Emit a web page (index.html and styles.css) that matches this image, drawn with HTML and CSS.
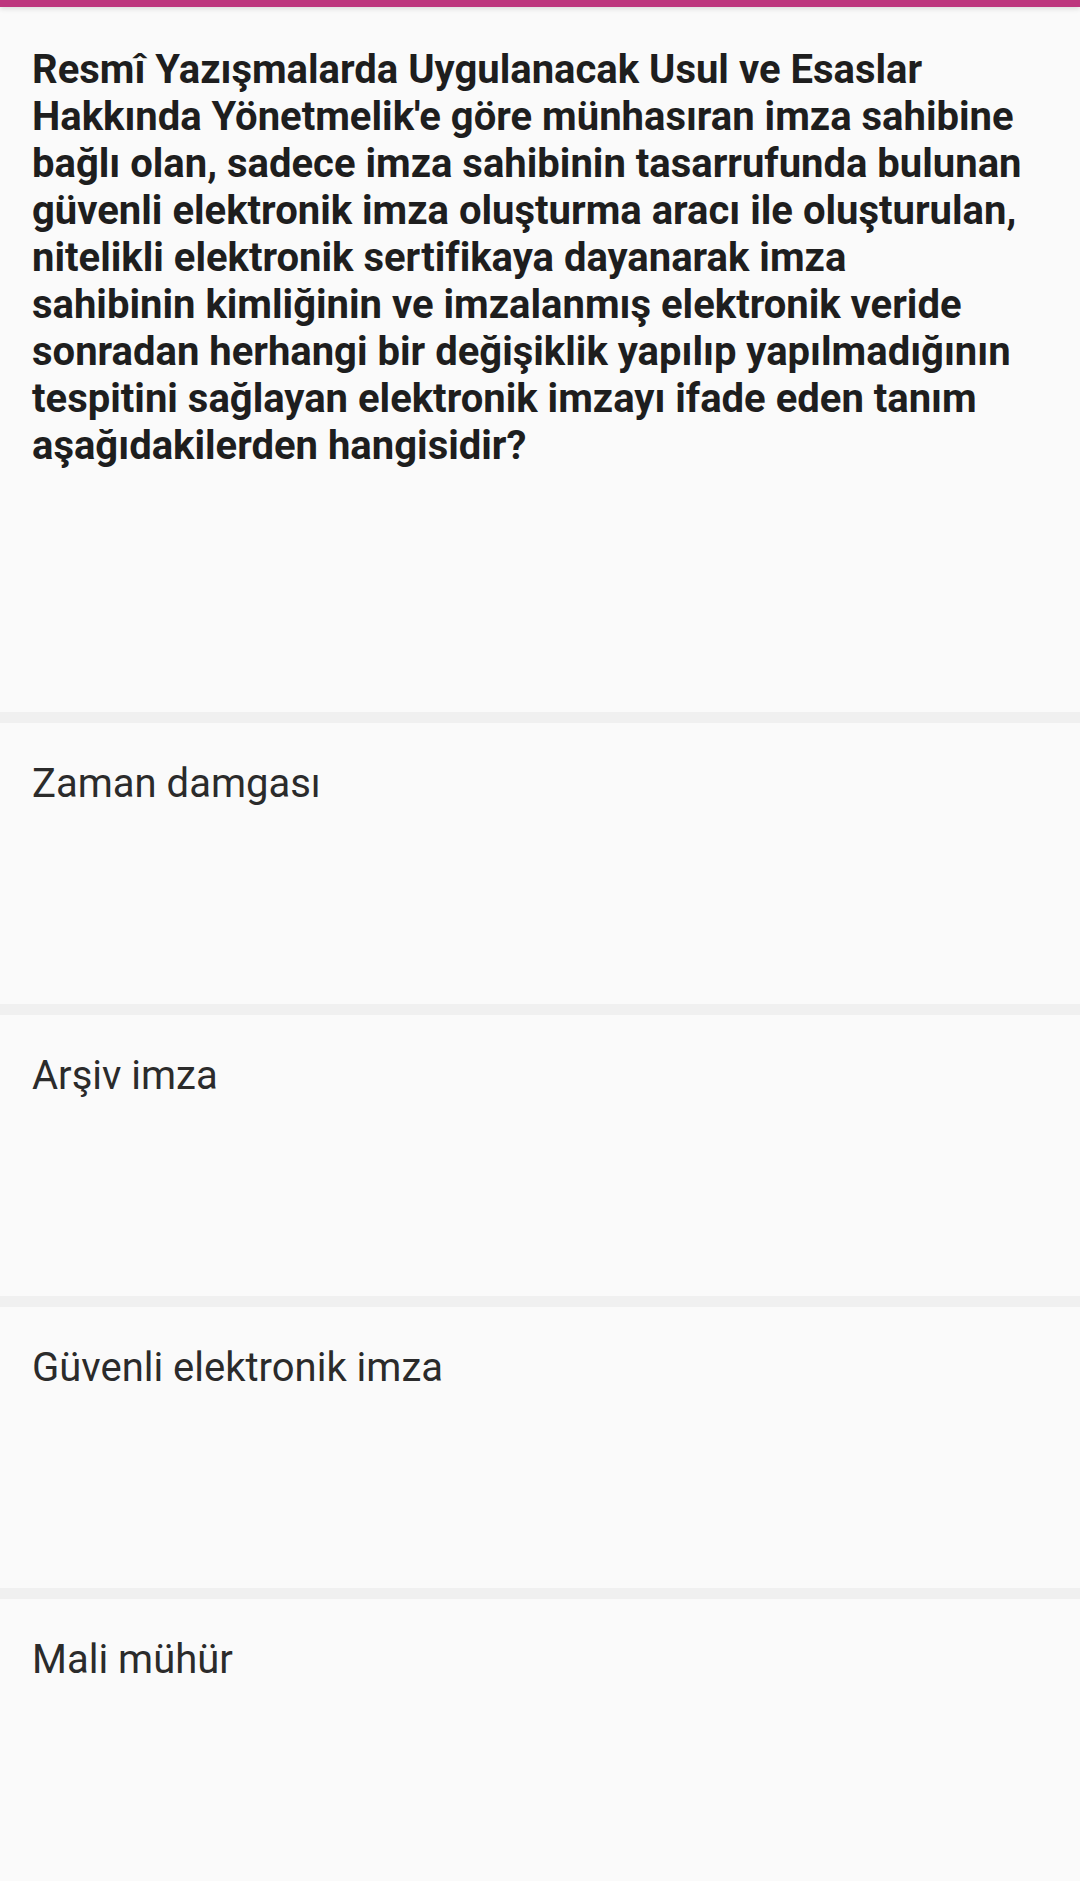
FILE: index.html
```html
<!DOCTYPE html>
<html lang="tr">
<head>
    <meta charset="UTF-8">
    <meta name="viewport" content="width=device-width, initial-scale=1.0">
    <title>Soru</title>
    <link rel="stylesheet" href="styles.css">
</head>
<body>

    <div class="top-bar"></div>

    <div class="quiz">
        <div class="question">
            <p>Resmî Yazışmalarda Uygulanacak Usul ve Esaslar<br>
            Hakkında Yönetmelik'e göre münhasıran imza sahibine<br>
            bağlı olan, sadece imza sahibinin tasarrufunda bulunan<br>
            güvenli elektronik imza oluşturma aracı ile oluşturulan,<br>
            nitelikli elektronik sertifikaya dayanarak imza<br>
            sahibinin kimliğinin ve imzalanmış elektronik veride<br>
            sonradan herhangi bir değişiklik yapılıp yapılmadığının<br>
            tespitini sağlayan elektronik imzayı ifade eden tanım<br>
            aşağıdakilerden hangisidir?</p>
        </div>

        <div class="option">Zaman damgası</div>
        <div class="option">Arşiv imza</div>
        <div class="option">Güvenli elektronik imza</div>
        <div class="option">Mali mühür</div>
    </div>

</body>
</html>
```

FILE: styles.css
```css
html, body {
    margin: 0;
    padding: 0;
}
body {
    font-family: Roboto, "Noto Sans", Arial, sans-serif;
    background-color: #fafafa;
    color: #212121;
    width: 1080px;
    min-height: 1881px;
}
.top-bar {
    position: relative;
    z-index: 1;
    height: 7px;
    background: #bd367e;
    box-shadow: 0 2px 5px rgba(0, 0, 0, 0.12);
}
.question {
    box-sizing: border-box;
    height: 705px;
    padding: 39px 20px 0 32px;
}
.question p {
    margin: 0;
    font-size: 40px;
    line-height: 47px;
    font-weight: bold;
    color: #1e1e1e;
    white-space: nowrap;
}
.option {
    box-sizing: border-box;
    height: 292px;
    padding: 37px 32px 0;
    border-top: 11px solid #f0f0f0;
    font-size: 40px;
    line-height: 48px;
    color: #2b2b2b;
}
```
